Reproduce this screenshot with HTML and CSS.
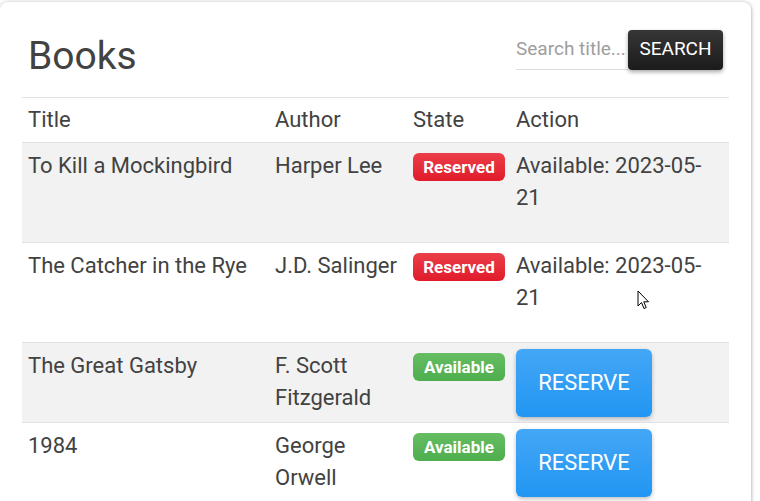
FILE: index.html
```html
<!DOCTYPE html>
<html>
<head>
<meta charset="utf-8">
<link rel="stylesheet" href="styles.css">
</head>
<body>
<div class="card">
  <div class="head">
    <h1 class="title">Books</h1>
    <div class="search">
      <input class="search-input" type="text" placeholder="Search title...">
      <button class="search-btn">Search</button>
    </div>
  </div>
  <table class="books">
    <colgroup>
      <col class="c-title"><col class="c-author"><col class="c-state"><col class="c-action">
    </colgroup>
    <thead>
      <tr><th>Title</th><th>Author</th><th>State</th><th>Action</th></tr>
    </thead>
    <tbody>
      <tr>
        <td>To Kill a Mockingbird</td>
        <td>Harper Lee</td>
        <td><span class="badge badge-red">Reserved</span></td>
        <td><p class="avail">Available: 2023-05-21</p></td>
      </tr>
      <tr>
        <td>The Catcher in the Rye</td>
        <td>J.D. Salinger</td>
        <td><span class="badge badge-red">Reserved</span></td>
        <td><p class="avail">Available: 2023-05-21</p></td>
      </tr>
      <tr>
        <td>The Great Gatsby</td>
        <td>F. Scott Fitzgerald</td>
        <td><span class="badge badge-green">Available</span></td>
        <td><button class="reserve">Reserve</button></td>
      </tr>
      <tr>
        <td>1984</td>
        <td>George Orwell</td>
        <td><span class="badge badge-green">Available</span></td>
        <td><button class="reserve">Reserve</button></td>
      </tr>
    </tbody>
  </table>
</div>
<svg class="cursor" width="14" height="22" viewBox="0 0 14 22">
  <path d="M1 1 L1 16 L4.5 12.5 L7 18.5 L9.2 17.6 L6.8 11.8 L11.5 11.8 Z" fill="#fff" stroke="#000" stroke-width="1" stroke-linejoin="round"/>
</svg>
</body>
</html>
```

FILE: styles.css
```css
html, body {
  margin: 0;
  padding: 0;
  background: #fff;
}
body {
  font-family: Roboto, "Liberation Sans", sans-serif;
  color: #424242;
  overflow: hidden;
  height: 501px;
}
.card {
  margin-top: 2px;
  width: 751px;
  height: 520px;
  box-sizing: border-box;
  padding: 0 22px;
  background: #fff;
  border-radius: 8px;
  box-shadow: 0 0 4px rgba(0, 0, 0, 0.22), 1px 1px 3px rgba(0,0,0,0.12);
}
.head {
  display: flex;
  justify-content: space-between;
  align-items: flex-start;
  padding: 31px 6px 17px 6px;
}
.title {
  margin: 0;
  font-size: 39px;
  font-weight: 400;
  line-height: 47px;
  color: #424242;
}
.search {
  display: flex;
  align-items: stretch;
  margin-top: -3px;
  height: 40px;
}
.search-input {
  width: 112px;
  height: 40px;
  box-sizing: border-box;
  border: none;
  border-bottom: 1px solid #dcdcdc;
  padding: 0 0 3px 0;
  font-family: Roboto, sans-serif;
  font-size: 19px;
  color: #424242;
  outline: none;
  background: transparent;
}
.search-input::placeholder {
  color: #9e9e9e;
}
.search-btn {
  width: 95px;
  height: 40px;
  border: none;
  border-radius: 4px;
  background: linear-gradient(#363636, #1b1b1b);
  color: #fff;
  font-family: Roboto, sans-serif;
  font-size: 19px;
  text-transform: uppercase;
  padding: 0 0 4px 0;
  box-shadow: 0 2px 4px rgba(0, 0, 0, 0.35);
}
.books {
  width: 707px;
  table-layout: fixed;
  border-collapse: collapse;
  font-size: 22px;
  line-height: 32.5px;
}
.c-title { width: 247px; }
.c-author { width: 138px; }
.c-state { width: 103px; }
.c-action { width: 219px; }
.books th {
  text-align: left;
  font-weight: 400;
  padding: 6px 6px 5px 6px;
  border-top: 1px solid #e0e0e6;
  border-bottom: 1px solid #e0e0e6;
}
.books td {
  padding: 7px 6px;
  vertical-align: top;
  border-bottom: 1px solid #e0e0e6;
}
.books tbody tr:nth-child(odd) td {
  background: #f2f2f2;
}
.avail {
  margin: 0 0 20px 0;
}
.badge {
  display: inline-block;
  width: 92px;
  height: 28px;
  line-height: 28px;
  text-align: center;
  border-radius: 6px;
  color: #fff;
  font-weight: 700;
  font-size: 17px;
  vertical-align: 0;
}
.badge-red {
  background: linear-gradient(#eb3f49, #e01b2a);
}
.badge-green {
  background: linear-gradient(#66bd63, #4eae4e);
}
.reserve {
  display: block;
  margin: -1px 0 -3px 0;
  width: 136px;
  height: 68px;
  border: none;
  border-radius: 6px;
  background: linear-gradient(#44a7f6, #2196f3);
  color: #fff;
  font-family: Roboto, sans-serif;
  font-size: 22px;
  text-transform: uppercase;
  padding: 0;
  box-shadow: 0 2px 4px rgba(0, 0, 0, 0.25);
}
.cursor {
  position: absolute;
  left: 637px;
  top: 290px;
}
```
